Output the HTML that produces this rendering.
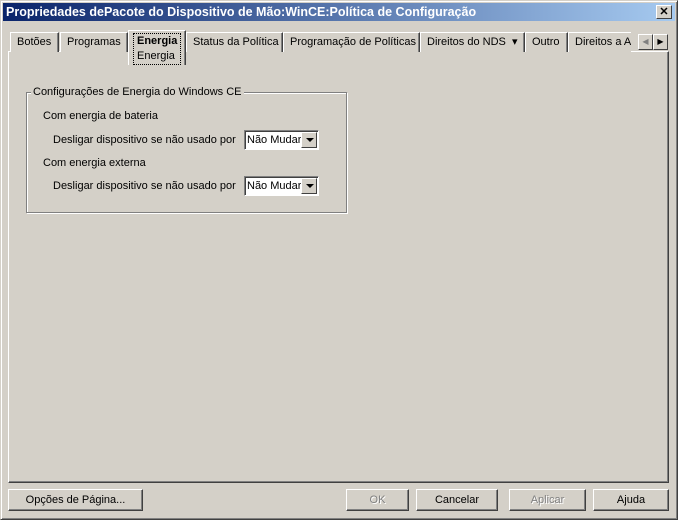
<!DOCTYPE html>
<html><head><meta charset="utf-8"><style>
*{margin:0;padding:0;box-sizing:border-box}
body{width:678px;height:520px;background:#d4d0c8;font:11px "Liberation Sans",sans-serif;color:#000;position:relative;overflow:hidden}
.a{position:absolute}
.win{left:0;top:0;width:678px;height:520px;border:1px solid;border-color:#d4d0c8 #404040 #404040 #d4d0c8;box-shadow:inset 1px 1px #fff,inset -1px -1px #808080}
.title{left:3px;top:3px;width:672px;height:18px;background:linear-gradient(90deg,#0a246a,#a6caf0);color:#fff;font-weight:bold;font-size:12.5px;line-height:18px;padding-left:3px}
.x{left:656px;top:5px;width:16px;height:14px;background:#d4d0c8;border:1px solid;border-color:#fff #404040 #404040 #fff;text-align:center;line-height:12px;font-size:11px;font-weight:bold;color:#000}
.panel{left:8px;top:51px;width:661px;height:432px;border:1px solid;border-color:#fff #404040 #404040 #fff;box-shadow:inset -1px -1px #808080}
.tab{top:32px;height:20px;border:1px solid;border-bottom:none;border-color:#fff #404040 #fff #fff;box-shadow:inset -1px 0 #808080;padding:0 6px;line-height:19px;white-space:nowrap;overflow:hidden;background:#d4d0c8}
.sel{top:30px;height:35px;font-weight:bold;z-index:2}
.btn{top:489px;height:22px;border:1px solid;border-color:#fff #404040 #404040 #fff;box-shadow:inset -1px -1px #808080;text-align:center;line-height:21px}
.dis{color:#808080;text-shadow:1px 1px #fff}
.grp{left:26px;top:92px;width:321px;height:121px;border:1px solid #808080;box-shadow:1px 1px #fff,inset 1px 1px #fff}
.sel2{width:75px;height:20px;background:#fff;border:1px solid;border-color:#808080 #fff #fff #808080;box-shadow:inset 1px 1px #404040;line-height:19px;padding-left:2px}
.dd{position:absolute;right:1px;top:1px;width:16px;height:16px;background:#d4d0c8;border:1px solid;border-color:#fff #404040 #404040 #fff}
.dd:after{content:"";position:absolute;left:4px;top:5px;border:4px solid transparent;border-top:4px solid #000;border-bottom:0}
.arr{top:34px;width:15px;height:16px;background:#d4d0c8;border:1px solid;border-color:#fff #404040 #404040 #fff}
</style></head><body>
<div class="a win"></div>
<div class="a title">Propriedades dePacote do Dispositivo de Mão:WinCE:Política de Configuração</div>
<div class="a x">✕</div>
<div class="a panel"></div>
<div class="a tab" style="left:10px;width:49px">Botões</div>
<div class="a tab" style="left:60px;width:68px">Programas</div>
<div class="a tab sel" style="left:128px;width:58px;padding:0 4px"><div style="border:1px dotted #000;padding:0 3px;line-height:15px;margin-top:2px">Energia<br><span style="font-weight:normal">Energia</span></div></div>
<div class="a tab" style="left:186px;width:97px">Status da Política</div>
<div class="a tab" style="left:283px;width:137px">Programação de Políticas</div>
<div class="a tab" style="left:420px;width:105px">Direitos do NDS &nbsp;▾</div>
<div class="a tab" style="left:525px;width:43px">Outro</div>
<div class="a tab" style="left:568px;width:63px;border-right:none;box-shadow:none">Direitos a A</div>
<div class="a arr" style="left:638px;color:#808080;font-size:8px;text-align:center;line-height:14px">◀</div>
<div class="a arr" style="left:653px;font-size:8px;text-align:center;line-height:14px">▶</div>
<div class="a grp"></div>
<div class="a" style="left:31px;top:86px;background:#d4d0c8;padding:0 2px">Configurações de Energia do Windows CE</div>
<div class="a" style="left:43px;top:110px">Com energia de bateria</div>
<div class="a" style="left:53px;top:134px">Desligar dispositivo se não usado por</div>
<div class="a sel2" style="left:244px;top:130px">Não Mudar<div class="dd"></div></div>
<div class="a" style="left:43px;top:157px">Com energia externa</div>
<div class="a" style="left:53px;top:180px">Desligar dispositivo se não usado por</div>
<div class="a sel2" style="left:244px;top:176px">Não Mudar<div class="dd"></div></div>
<div class="a btn" style="left:8px;width:135px">Opções de Página...</div>
<div class="a btn dis" style="left:346px;width:63px">OK</div>
<div class="a btn" style="left:416px;width:82px">Cancelar</div>
<div class="a btn dis" style="left:509px;width:77px">Aplicar</div>
<div class="a btn" style="left:593px;width:76px">Ajuda</div>
</body></html>
